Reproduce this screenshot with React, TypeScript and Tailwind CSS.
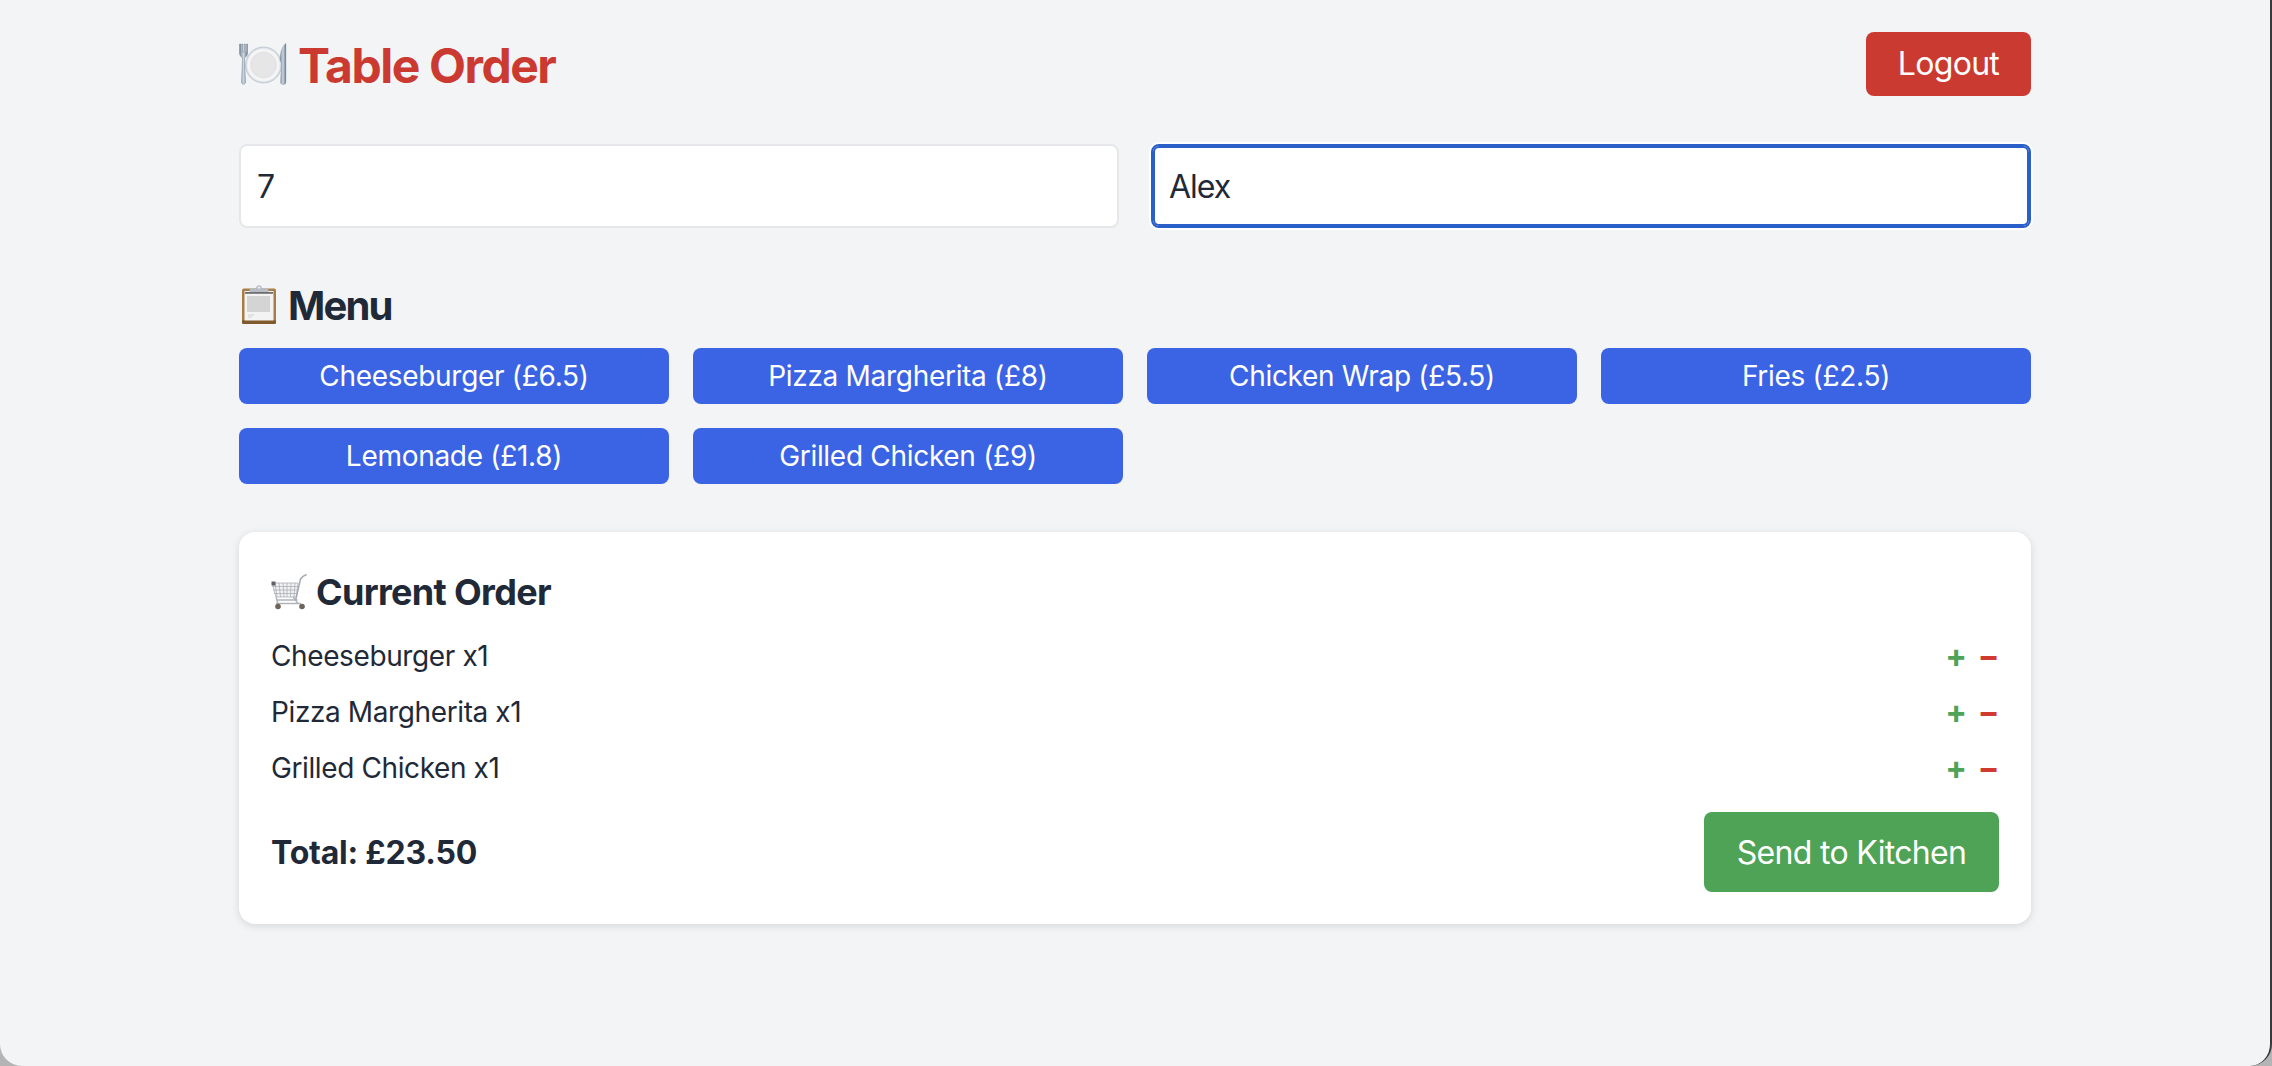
import React from "react";

function PlateIcon() {
  return (
    <svg width="48" height="43" viewBox="0 0 48 43" className="shrink-0">
      <defs>
        <radialGradient id="pl" cx="50%" cy="50%" r="50%">
          <stop offset="0%" stopColor="#e8e8e8" />
          <stop offset="70%" stopColor="#ececec" />
          <stop offset="85%" stopColor="#f8f8f8" />
          <stop offset="100%" stopColor="#c9d2dc" />
        </radialGradient>
        <linearGradient id="mt" x1="0" y1="0" x2="1" y2="0">
          <stop offset="0%" stopColor="#7f8a96" />
          <stop offset="50%" stopColor="#c8d5e3" />
          <stop offset="100%" stopColor="#6f7b87" />
        </linearGradient>
      </defs>
      <circle cx="24.500" cy="22" r="18" fill="url(#pl)" stroke="#b9c3ce" strokeWidth="0.7" />
      <circle cx="24.500" cy="22" r="12.500" fill="#e6e6e6" stroke="#d5dae0" strokeWidth="0.6" />
      <path d="M0.500 1v9c0 3 2 4 3 5l-1 24c0 3 4 3 4 0l-1-24c1-1 3-2 3-5V1H7.600v8H6.400V1H5.200v8H4V1H2.800v8H2V1z" fill="url(#mt)" stroke="#6b7683" strokeWidth="0.4" />
      <path d="M47 0.500C43 3 41.500 9 41 16c-.1 2 .8 3 1.500 3.500L41.500 39c0 3.500 5.500 3.500 5.500 0V1c0-.5-.2-.7-.5-.5z" fill="url(#mt)" stroke="#7f8b97" strokeWidth="0.3" />
    </svg>
  );
}

function ClipboardIcon() {
  return (
    <svg width="34" height="39" viewBox="0 0 34 39" className="shrink-0">
      <rect x="0" y="3.500" width="34" height="35.500" rx="2" fill="#a77c45" />
      <rect x="0" y="35" width="34" height="4" rx="1.500" fill="#80592c" />
      <rect x="2.500" y="6" width="29" height="29.500" fill="#f3f3f3" />
      <rect x="5" y="11" width="23" height="16" fill="#d4d4d4" />
      <path d="M6 30h6M6 32h4" stroke="#c9c9c9" strokeWidth="0.8" />
      <path d="M14 3.500c0-4.500 6-4.500 6 0h5c1 0 1.500 1 1.500 2.500v2H7.500V6C7.500 4.500 8 3.500 9 3.500z" fill="#b5bcc5" />
      <rect x="3" y="7" width="28" height="1.800" fill="#6e6e6e" />
      <circle cx="17" cy="2.600" r="1.200" fill="#eef0f3" />
    </svg>
  );
}

function CartIcon() {
  return (
    <svg width="36" height="36" viewBox="0 0 36 36" className="shrink-0">
      <g stroke="#a4a8ad" strokeWidth="0.7" fill="none">
        <path d="M1 9h26l-1.500 14H5z" fill="#f1f2f3" />
        <path d="M4 9l2 14M8 9l1.500 14M12 9l1 14M16 9v14M20 9l-.5 14M24 9l-1 14" />
        <path d="M1.500 12.500h25M2 16h24M3 19.500h22.500" />
      </g>
      <rect x="0.500" y="7.500" width="4" height="4" fill="#5f6368" />
      <path d="M35.500 0.500C33 1.500 31 2.500 29.500 5L24.500 26.500" stroke="#a4a8ad" strokeWidth="1.500" fill="none" />
      <path d="M5 26h21.500M5 29.500h25M5 23l2 6.500M22 23l5 6.500" stroke="#b0b3b7" strokeWidth="1.300" fill="none" />
      <circle cx="7" cy="32.500" r="2.800" fill="#6f6259" />
      <circle cx="31" cy="32.500" r="2.800" fill="#6f6259" />
    </svg>
  );
}

const menu = [
  "Cheeseburger (£6.5)",
  "Pizza Margherita (£8)",
  "Chicken Wrap (£5.5)",
  "Fries (£2.5)",
  "Lemonade (£1.8)",
  "Grilled Chicken (£9)",
];

const items = ["Cheeseburger x1", "Pizza Margherita x1", "Grilled Chicken x1"];

export default function App() {
  return (
    <div className="h-[1066px] w-full overflow-hidden bg-[#b4b4b4] font-['Inter',sans-serif] text-[#1f2937]">
      <div className="h-full rounded-b-[22px] border-r-2 border-[#3a3a3a] bg-[#f3f4f6] pt-8">
        <div className="ml-[239px] w-[1792px]">
          <header className="mb-12 flex h-16 items-center justify-between">
            <h1 className="flex items-center gap-[11px] text-[48px] leading-[64px] font-bold tracking-[-1.45px] text-[#cb3a31]">
              <PlateIcon />
              <span className="pt-[3px]">Table Order</span>
            </h1>
            <button className="h-[64px] w-[165px] rounded-lg bg-[#cb3a31] text-[32px] leading-[48px] tracking-[-0.7px] text-white">Logout</button>
          </header>

          <div className="mb-12 grid grid-cols-2 gap-8">
            <input
              readOnly
              value="7"
              className="h-[84px] w-full rounded-lg border-2 border-[#e5e7eb] bg-white px-4 text-[32px] text-[#1f2937] outline-none"
            />
            <input
              readOnly
              value="Alex"
              className="h-[84px] w-full rounded-lg border-2 border-[#2a5fc9] bg-white px-4 text-[32px] tracking-[-1px] text-[#1f2937] shadow-[inset_0_0_0_2px_#2a5fc9,0_0_0_2px_#ffffff] outline-none"
            />
          </div>

          <h2 className="mb-4 flex h-14 items-center gap-[12px] pl-[3px] text-[40px] leading-[56px] font-bold tracking-[-1.8px]">
            <ClipboardIcon />
            <span className="pt-[3px]">Menu</span>
          </h2>
          <div className="mb-12 grid grid-cols-4 gap-6">
            {menu.map((m) => (
              <button key={m} className="h-14 rounded-lg bg-[#3b64e4] text-[28px] leading-10 tracking-[-0.3px] text-white">
                {m}
              </button>
            ))}
          </div>

          <section className="rounded-2xl bg-white p-8 shadow-[0_2px_8px_rgba(0,0,0,0.12)]">
            <h3 className="mb-4 flex items-center gap-[9px] text-[36px] leading-[56px] font-bold tracking-[-0.67px]">
              <CartIcon />
              <span>Current Order</span>
            </h3>
            <ul className="flex flex-col gap-4">
              {items.map((it) => (
                <li key={it} className="flex h-10 items-center justify-between text-[28px] leading-10 tracking-[-0.39px]">
                  <span>{it}</span>
                  <span className="flex items-center gap-[11px] text-[32px] font-bold">
                    <span className="text-[#4ea356]">+</span>
                    <span className="text-[#d03a30]">−</span>
                  </span>
                </li>
              ))}
            </ul>
            <div className="mt-6 flex items-center justify-between">
              <span className="pt-0.5 text-[32px] leading-[48px] font-bold tracking-[-0.22px]">Total: £23.50</span>
              <button className="h-20 w-[295px] rounded-lg bg-[#4ea356] pt-0.5 text-[32px] leading-[48px] tracking-[-0.67px] text-white">Send to Kitchen</button>
            </div>
          </section>
        </div>
      </div>
    </div>
  );
}
